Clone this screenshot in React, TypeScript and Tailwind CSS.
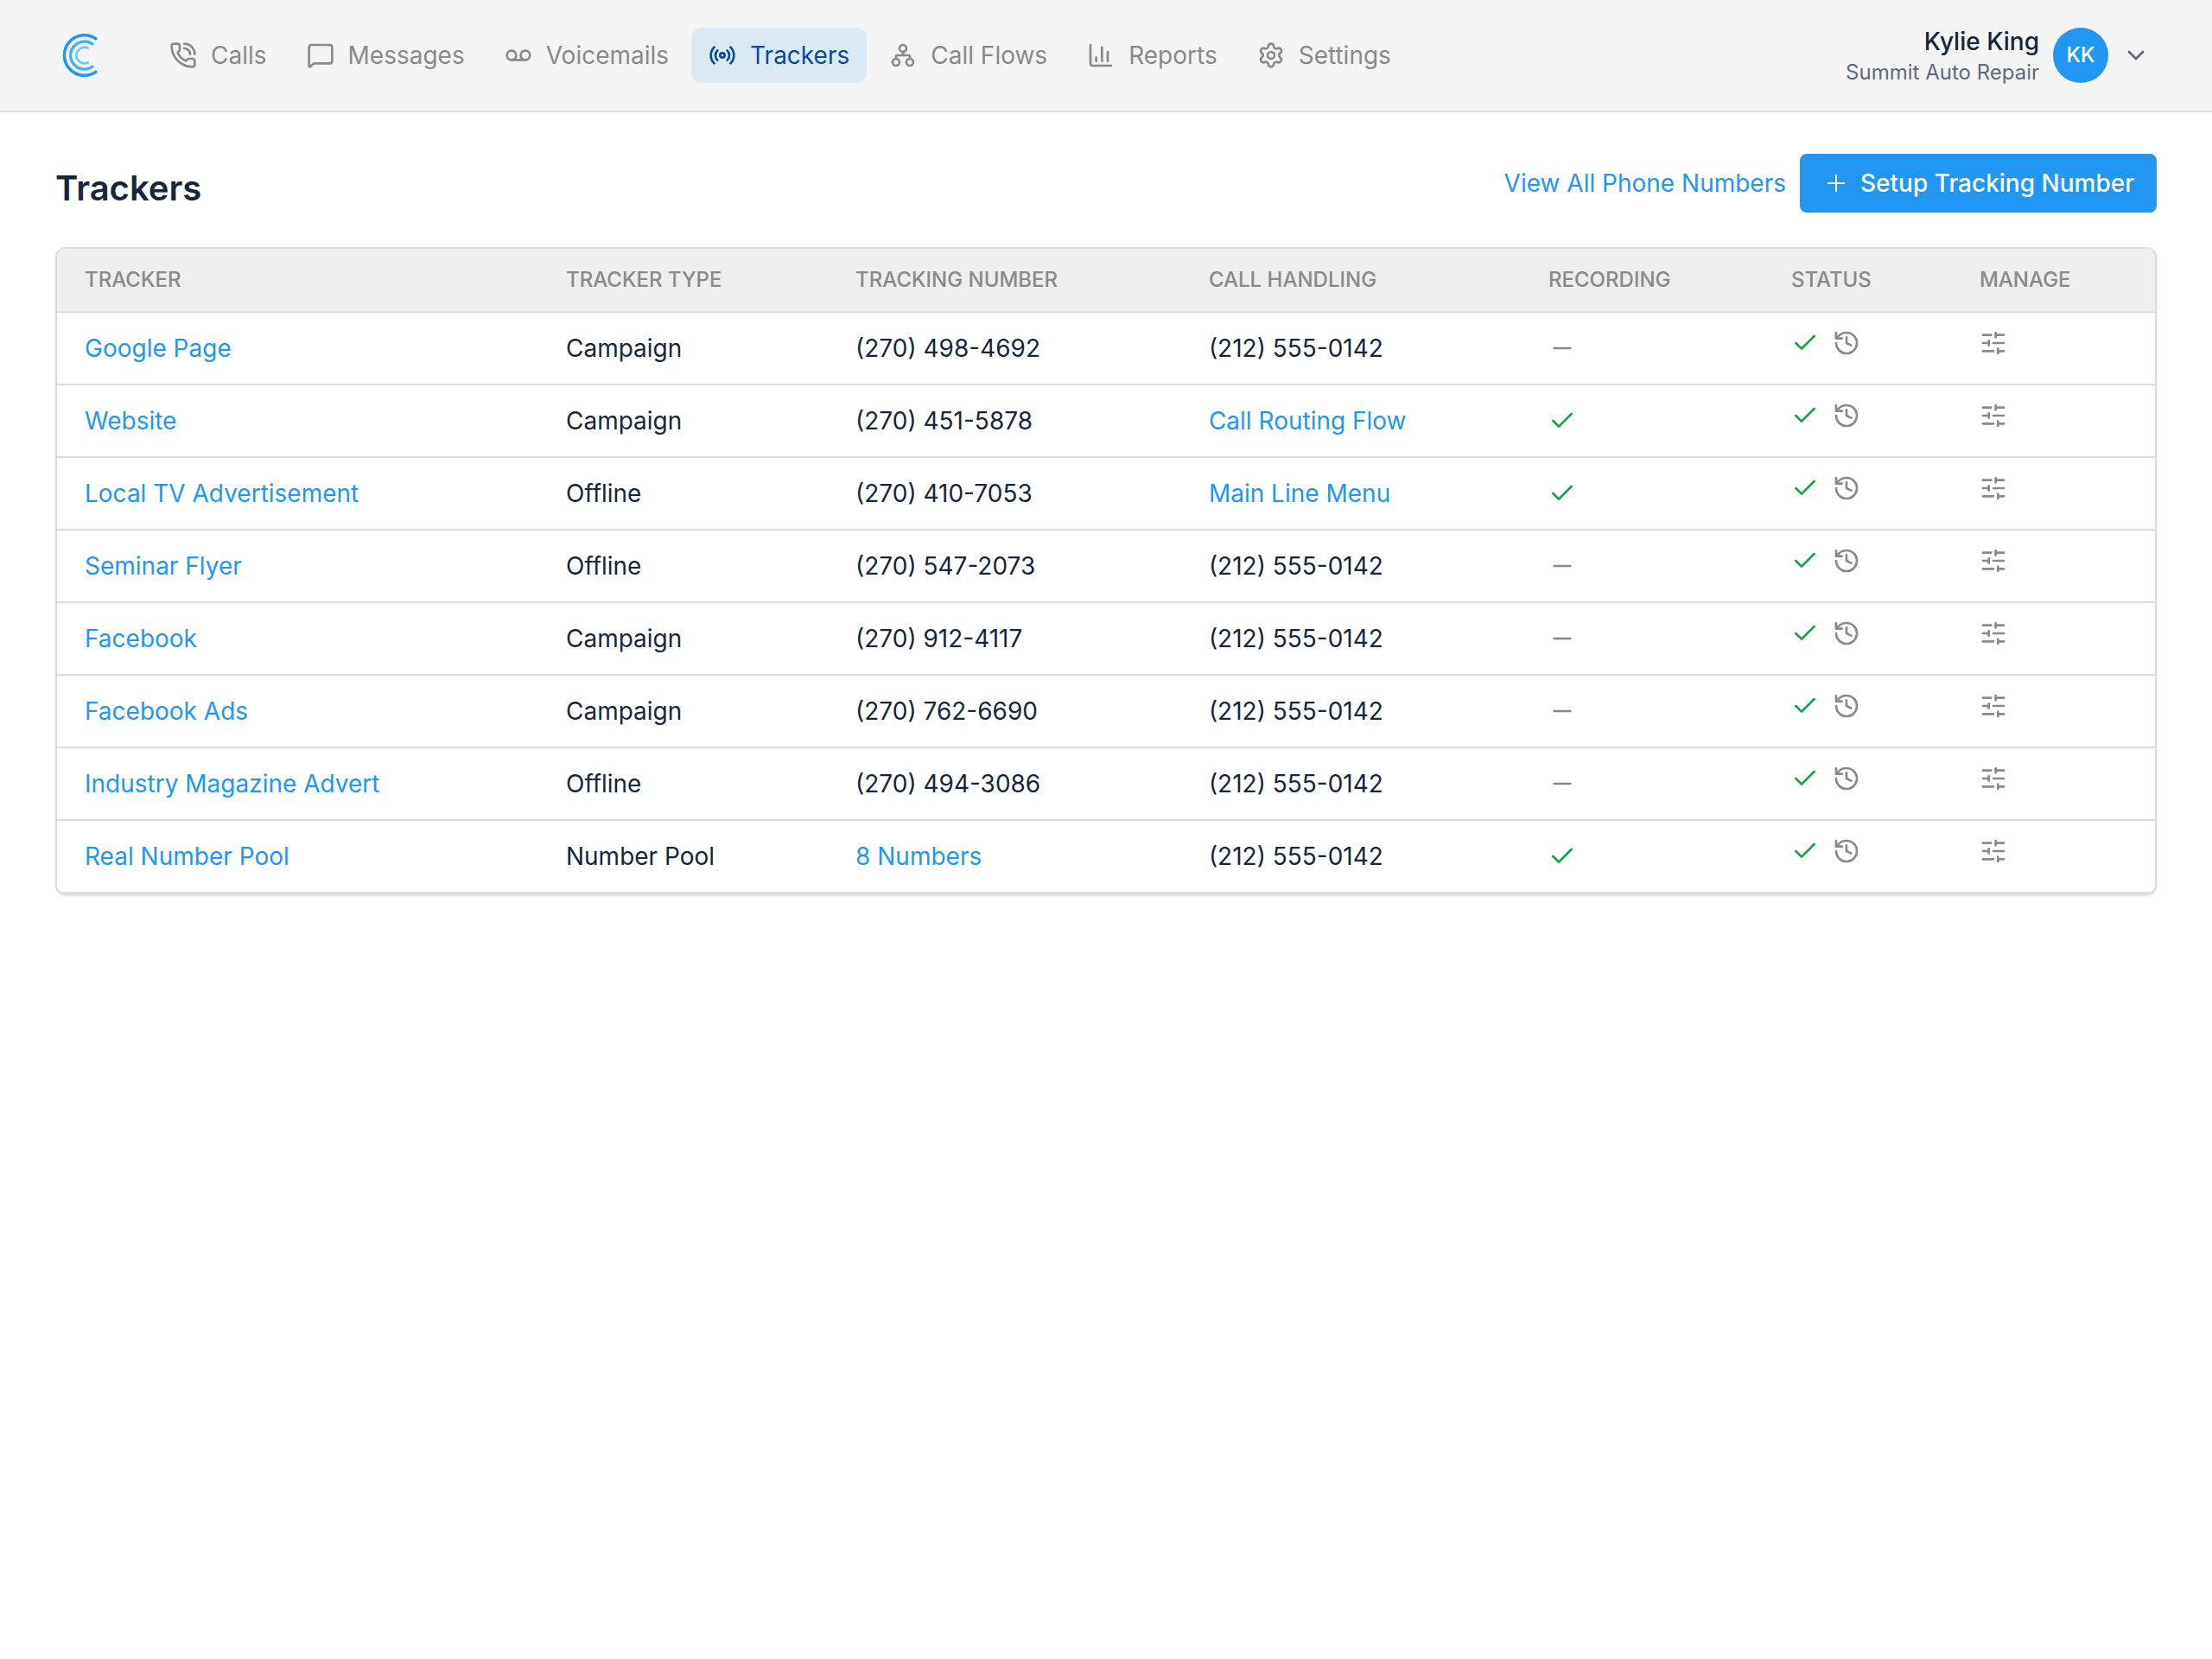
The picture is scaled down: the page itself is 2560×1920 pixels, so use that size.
import {
  ChartColumn,
  Check,
  ChevronDown,
  History,
  MessageSquare,
  Minus,
  PhoneCall,
  Plus,
  Radio,
  Settings,
  SlidersHorizontal,
  Voicemail,
} from "lucide-react";
import { clsx } from "clsx";

function FlowIcon({ className }: { className?: string }) {
  return (
    <svg
      viewBox="0 0 24 24"
      fill="none"
      stroke="currentColor"
      strokeWidth="2"
      strokeLinecap="round"
      strokeLinejoin="round"
      className={className}
    >
      <circle cx="12" cy="6" r="3" />
      <circle cx="6" cy="18" r="3" />
      <circle cx="18" cy="18" r="3" />
      <path d="M6 15v-2a1 1 0 0 1 1-1h10a1 1 0 0 1 1 1v2" />
      <path d="M12 12V9" />
    </svg>
  );
}

const NAV = [
  { label: "Calls", icon: PhoneCall },
  { label: "Messages", icon: MessageSquare },
  { label: "Voicemails", icon: Voicemail },
  { label: "Trackers", icon: Radio, active: true },
  { label: "Call Flows", icon: FlowIcon },
  { label: "Reports", icon: ChartColumn },
  { label: "Settings", icon: Settings },
];

const COLUMNS = [
  { label: "Tracker", width: "w-[22.94%]" },
  { label: "Tracker Type", width: "w-[13.8%]" },
  { label: "Tracking Number", width: "w-[16.84%]" },
  { label: "Call Handling", width: "w-[16.19%]" },
  { label: "Recording", width: "w-[11.57%]" },
  { label: "Status", width: "w-[8.98%]" },
  { label: "Manage", width: "w-[9.68%]" },
];

type Tracker = {
  name: string;
  type: string;
  number: string;
  handling: string;
  recording?: boolean;
  pool?: boolean;
  flow?: boolean;
};

const TRACKERS: Tracker[] = [
  { name: "Google Page", type: "Campaign", number: "(270) 498-4692", handling: "(212) 555-0142" },
  { name: "Website", type: "Campaign", number: "(270) 451-5878", handling: "Call Routing Flow", flow: true, recording: true },
  { name: "Local TV Advertisement", type: "Offline", number: "(270) 410-7053", handling: "Main Line Menu", flow: true, recording: true },
  { name: "Seminar Flyer", type: "Offline", number: "(270) 547-2073", handling: "(212) 555-0142" },
  { name: "Facebook", type: "Campaign", number: "(270) 912-4117", handling: "(212) 555-0142" },
  { name: "Facebook Ads", type: "Campaign", number: "(270) 762-6690", handling: "(212) 555-0142" },
  { name: "Industry Magazine Advert", type: "Offline", number: "(270) 494-3086", handling: "(212) 555-0142" },
  { name: "Real Number Pool", type: "Number Pool", number: "8 Numbers", handling: "(212) 555-0142", pool: true, recording: true },
];

function Logo() {
  return (
    <svg viewBox="0 0 64 64" fill="none" className="size-16">
      <path d="M48 13.6A23.3 23.3 0 1 0 48 50.4" stroke="#2196f3" strokeWidth="3.4" />
      <path d="M44 19.8A16 16 0 1 0 44 44.2" stroke="#42b0f5" strokeWidth="3.3" />
      <path d="M38.8 24.2A9.3 9.3 0 1 0 38.8 39.8" stroke="#74c4f8" strokeWidth="2.7" />
    </svg>
  );
}

function MaybeLink({ link, children }: { link?: boolean; children: string }) {
  if (!link) return <>{children}</>;
  return (
    <a href="#" className="text-[#2196f3]">
      {children}
    </a>
  );
}

function Header() {
  return (
    <header className="flex h-[130px] items-center justify-between border-b-2 border-[#dddddd] bg-[#f4f4f4] px-16">
      <div className="flex items-center">
        <a href="#" aria-label="Home">
          <Logo />
        </a>
        <nav className="ml-12 flex gap-1.5">
          {NAV.map(({ label, icon: Icon, active }) => (
            <a
              key={label}
              href="#"
              className={clsx(
                "flex h-16 items-center gap-4 rounded-xl px-5",
                active ? "bg-[#dbe9f5] text-[#0d47a1]" : "text-[#8a8a8a]"
              )}
            >
              <Icon className="size-8" />
              {label}
            </a>
          ))}
        </nav>
      </div>
      <button type="button" className="flex items-center gap-4 text-right">
        <span>
          <span className="block leading-10 font-medium">Kylie King</span>
          <span className="block text-2xl leading-8 text-[#5f6b7a]">Summit Auto Repair</span>
        </span>
        <span className="flex size-16 items-center justify-center rounded-full bg-[#2196f3] text-2xl font-medium text-white">
          KK
        </span>
        <ChevronDown className="mr-2 size-8 text-[#5f6b7a]" />
      </button>
    </header>
  );
}

export default function App() {
  return (
    <div className="min-h-screen bg-white font-['Inter',sans-serif] text-[28px] leading-10 text-[#17263a]">
      <Header />
      <main className="px-16 pt-12">
        <div className="flex items-start justify-between">
          <h1 className="pt-4 text-[40px] leading-12 font-semibold">Trackers</h1>
          <div className="flex items-center gap-4">
            <a href="#" className="text-[#2196f3]">
              View All Phone Numbers
            </a>
            <button
              type="button"
              className="flex h-17 items-center gap-3 rounded-lg border-2 border-[#2196f3] bg-[#2196f3] px-6 font-medium text-white"
            >
              <Plus className="size-8" strokeWidth={1.5} />
              Setup Tracking Number
            </button>
          </div>
        </div>

        <div className="mt-10 overflow-hidden rounded-xl border-2 border-[#dddddd] shadow-sm">
          <table className="w-full table-fixed text-left">
            <thead>
              <tr className="h-[73px] border-b-2 border-[#dddddd] bg-[#eeeeee]">
                {COLUMNS.map((col) => (
                  <th
                    key={col.label}
                    className={clsx("px-8 text-2xl font-medium text-[#8a8a8a] uppercase", col.width)}
                  >
                    {col.label}
                  </th>
                ))}
              </tr>
            </thead>
            <tbody>
              {TRACKERS.map((t) => (
                <tr key={t.name} className="h-21 border-b-2 border-[#dddddd]">
                  <td className="px-8">
                    <MaybeLink link>{t.name}</MaybeLink>
                  </td>
                  <td className="px-8">{t.type}</td>
                  <td className="px-8">
                    <MaybeLink link={t.pool}>{t.number}</MaybeLink>
                  </td>
                  <td className="px-8">
                    <MaybeLink link={t.flow}>{t.handling}</MaybeLink>
                  </td>
                  <td className="px-8">
                    {t.recording ? (
                      <Check className="size-8 text-[#16a34a]" />
                    ) : (
                      <Minus className="size-8 text-[#8a8a8a]" />
                    )}
                  </td>
                  <td className="px-8 pb-3">
                    <div className="flex items-center gap-4">
                      <Check className="size-8 text-[#16a34a]" />
                      <button type="button" aria-label="History" className="text-[#8a8a8a]">
                        <History className="size-8" />
                      </button>
                    </div>
                  </td>
                  <td className="px-8 pb-3">
                    <button type="button" aria-label="Manage" className="flex text-[#8a8a8a]">
                      <SlidersHorizontal className="size-8" />
                    </button>
                  </td>
                </tr>
              ))}
            </tbody>
          </table>
        </div>
      </main>
    </div>
  );
}
